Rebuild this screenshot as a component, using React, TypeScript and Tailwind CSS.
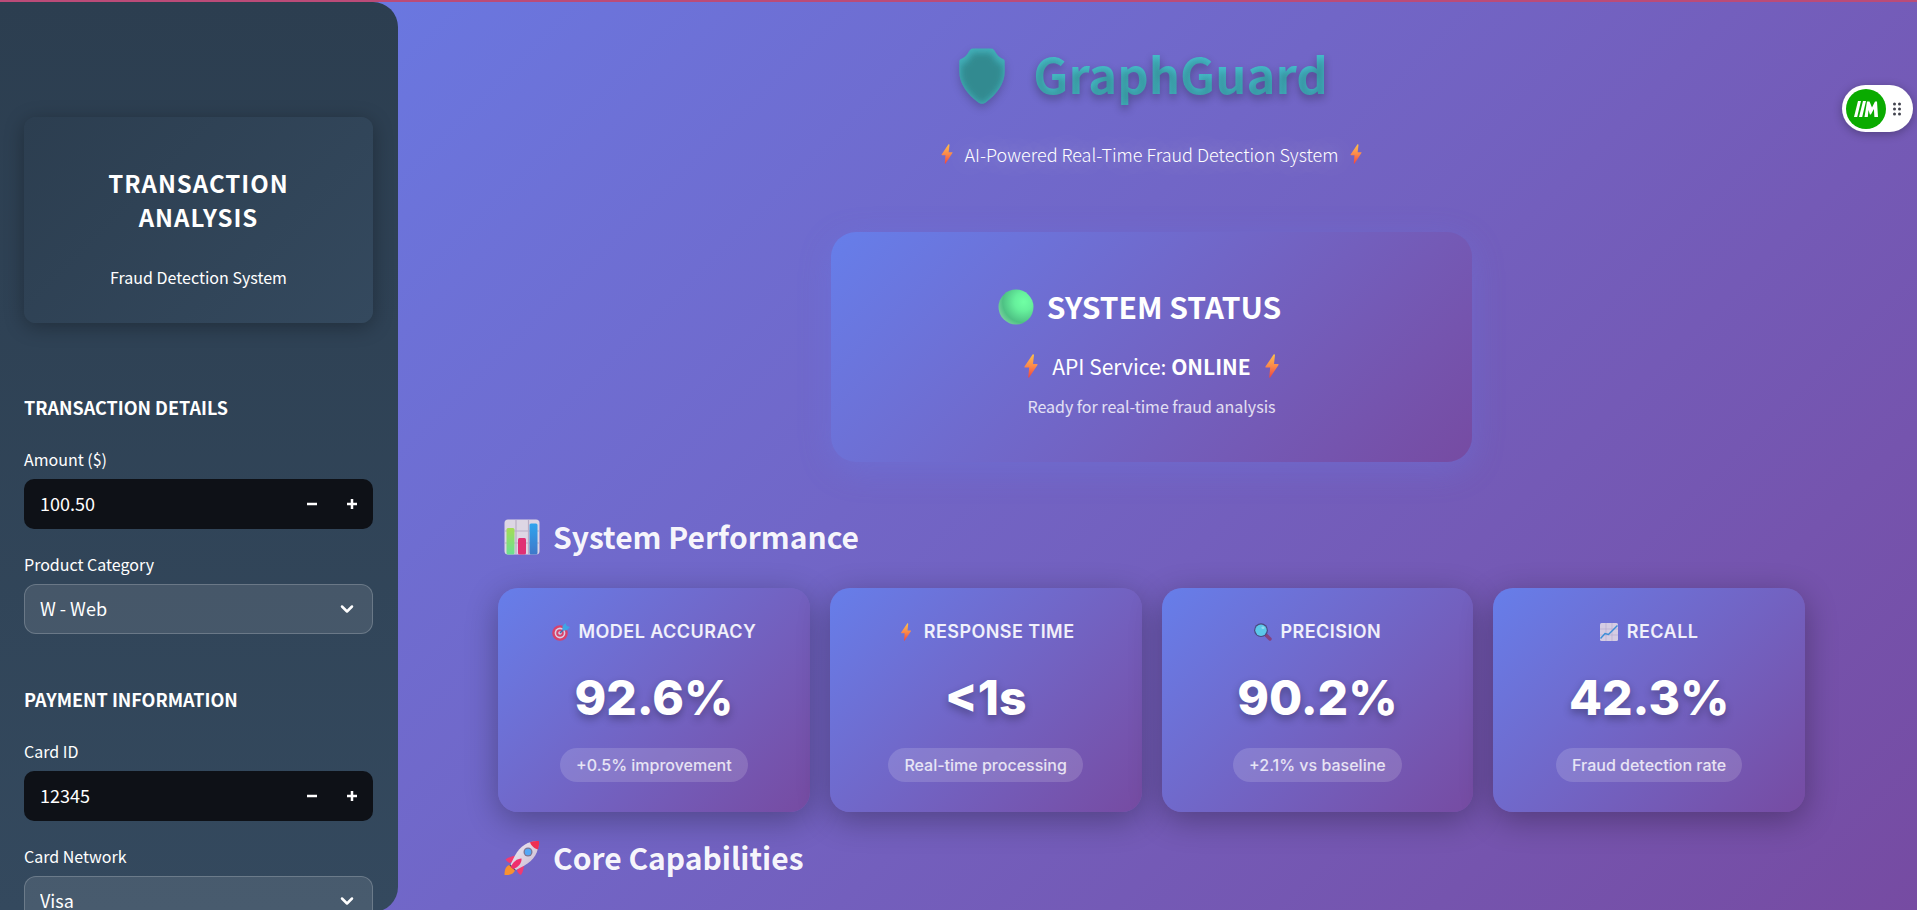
import React, { useId, useState } from "react";

const SANS = "font-['Noto_Sans_CJK_SC','Noto_Sans',sans-serif]";
const INTER = "font-['Inter','Liberation_Sans',sans-serif]";

function Bolt({ className }: { className: string }) {
  const id = useId();
  return (
    <svg viewBox="0 0 14 24" className={className} aria-hidden="true">
      <defs>
        <linearGradient id={id} x1="0" y1="0" x2="0" y2="1">
          <stop offset="0" stopColor="#fcc04a" />
          <stop offset="0.5" stopColor="#fb8a4b" />
          <stop offset="1" stopColor="#f0453f" />
        </linearGradient>
      </defs>
      <path d="M8.6 0.5 0.5 12.6c-.3.5 0 .9.5.9h4.2L4.3 23c-.1.7.6.9 1 .3l8.200-12.400c.3-.5 0-.9-.5-.9H9l1-9c.1-.7-.9-1.100-1.400-.5Z" fill={`url(#${id})`} />
    </svg>
  );
}

function Shield() {
  return (
    <svg viewBox="0 0 46 56" className="h-14 w-[46px] shrink-0 drop-shadow-[0_4px_4px_rgba(0,0,0,0.2)]" aria-hidden="true">
      <defs>
        <filter id="shield-soft" x="-20%" y="-20%" width="140%" height="140%">
          <feGaussianBlur stdDeviation="3" />
        </filter>
        <clipPath id="shield-clip">
          <path d="M14 .5h18c2.500 0 3.500 2 5 4.500 1.800 3 4 4.700 7.500 6.200 1 .5 1.200 1.300 1.200 2.300v10.500c0 11-8 22.500-19 30.500-2.500 1.700-4.900 1.700-7.400 0C8.300 46.500.300 35 .300 24V13.500c0-1 .2-1.800 1.200-2.300C5 9.700 7.200 8 9 5c1.500-2.500 2.500-4.500 5-4.500Z" />
        </clipPath>
      </defs>
      <g clipPath="url(#shield-clip)">
        <rect width="46" height="56" fill="#41aeb8" />
        <path d="M14 5h18l6 9 6 3v10c0 9-8 20-21 29C10 47 2 36 2 27V17l6-3Z" fill="#338a90" filter="url(#shield-soft)" />
      </g>
    </svg>
  );
}

function GreenCircle() {
  return (
    <svg viewBox="0 0 36 36" className="size-9" aria-hidden="true">
      <defs>
        <radialGradient id="orb" cx="0.72" cy="0.35" r="0.75">
          <stop offset="0" stopColor="#70ffa4" />
          <stop offset="0.35" stopColor="#66f09c" />
          <stop offset="0.8" stopColor="#4ec184" />
          <stop offset="1" stopColor="#72cf9b" />
        </radialGradient>
      </defs>
      <circle cx="18" cy="18" r="17.500" fill="url(#orb)" />
    </svg>
  );
}

function BarChart() {
  return (
    <svg viewBox="0 0 36 36" className="size-9" aria-hidden="true">
      <defs>
        <linearGradient id="bar-green" x1="0" y1="0" x2="0" y2="1">
          <stop offset="0" stopColor="#a5dc55" />
          <stop offset="1" stopColor="#6ae092" />
        </linearGradient>
        <linearGradient id="bar-blue" x1="0" y1="0" x2="0" y2="1">
          <stop offset="0" stopColor="#2fa4ee" />
          <stop offset="1" stopColor="#3f78c9" />
        </linearGradient>
      </defs>
      <rect x="0.500" y="0.500" width="35" height="35" rx="3.500" fill="#ddd6e4" />
      <path d="M12 1v34M24.500 1v34M1 12h34M1 24h34" stroke="#b9adc6" strokeWidth="1.200" />
      <rect x="2.500" y="9" width="8" height="26.500" rx="1.500" fill="url(#bar-green)" />
      <rect x="14" y="19" width="8" height="16.500" rx="1.500" fill="#e03074" />
      <rect x="25.500" y="4.500" width="8" height="31" rx="1.500" fill="url(#bar-blue)" />
    </svg>
  );
}

function Rocket() {
  return (
    <svg viewBox="0 0 36 36" className="size-9" aria-hidden="true">
      <defs>
        <linearGradient id="hull" x1="0" y1="0" x2="1" y2="1">
          <stop offset="0" stopColor="#f4eef6" />
          <stop offset="1" stopColor="#c5b6cd" />
        </linearGradient>
      </defs>
      <path d="M6 25c-3.500.5-5.500 3.500-5.500 10 4 .5 9-.5 10.500-4.500Z" fill="#f8912f" />
      <path d="m5.500 25.500 5.500 5 2-2.500-5-5Z" fill="#52476b" />
      <path d="M14 15.500c-5 .500-9.500 1.500-12.500 4 1 1.500 2.500 2.500 4 3.500L14 20ZM20 22c0 5-.5 9.500-3 13-2-1-3.200-2.500-4-4l3-9Z" fill="#f23a70" />
      <path d="M34.500 1C24 1 16 6 11 15.500L6.500 24.500l5.500 5.500 8.500-4.500C30 20 35 12.500 34.500 1Z" fill="url(#hull)" />
      <path d="M26 2.200C29 1 32 .7 35 1c.3 3 0 5.500-1 8.500-3.500-1-7-4-8-7.300Z" fill="#ee2f52" />
      <path d="M17.500 18.500C13 18.500 9 22 6.800 27l2.200 2C14 27.500 18 23.500 17.500 18.500Z" fill="#ef2f6d" />
      <circle cx="24" cy="12" r="4.500" fill="#7c7696" />
      <circle cx="24" cy="12" r="3.200" fill="#54a8f7" />
    </svg>
  );
}

function Target() {
  return (
    <svg viewBox="0 0 18 18" className="size-[18px]" aria-hidden="true">
      <circle cx="8" cy="10" r="7.800" fill="#d8416b" />
      <circle cx="8" cy="10" r="5.400" fill="#d9cfe6" />
      <circle cx="8" cy="10" r="3.800" fill="#d8416b" />
      <circle cx="8" cy="10" r="1.800" fill="#d9cfe6" />
      <path d="m8 10 5-5" stroke="#3a6fae" strokeWidth="1.500" />
      <path d="m10.500 7.500 0-4.500L13.500 0l1.200 3 3.300 1-3.200 3.200Z" fill="#3fa4e6" />
    </svg>
  );
}

function Magnifier() {
  return (
    <svg viewBox="0 0 18 18" className="size-[18px]" aria-hidden="true">
      <path d="m12 12 4 4" stroke="#85427f" strokeWidth="3.400" strokeLinecap="round" />
      <circle cx="7" cy="7.200" r="6.900" fill="#4a4a80" />
      <circle cx="7" cy="7.200" r="5.700" fill="#5cc8ea" />
      <ellipse cx="9" cy="4.800" rx="1.600" ry="1.200" fill="#93dcf2" />
    </svg>
  );
}

function TrendChart() {
  return (
    <svg viewBox="0 0 18 18" className="size-[18px]" aria-hidden="true">
      <rect width="18" height="18" rx="1.500" fill="#d5cce3" />
      <path d="M6 0v18M12 0v18M0 6h18M0 12h18" stroke="#b9add0" strokeWidth="0.700" />
      <path d="m0.500 15.500 4.500-5 3.500 1 9-9" fill="none" stroke="#3c8ed8" strokeWidth="1.500" />
    </svg>
  );
}

function NumberField({ label, initial, step, digits }: { label: string; initial: number; step: number; digits: number }) {
  const id = useId();
  const [value, setValue] = useState(initial.toFixed(digits));
  const bump = (d: number) => setValue((Number(value) + d).toFixed(digits));
  return (
    <div>
      <label htmlFor={id} className="block text-[16px] leading-6">{label}</label>
      <div className="mt-2 flex h-[50px] overflow-hidden rounded-[10px] bg-[#0e1117] pr-px">
        <input id={id} value={value} onChange={(e) => setValue(e.target.value)} inputMode="decimal" className="min-w-0 flex-1 bg-transparent px-4 pb-[2px] text-[18px] outline-none" />
        <button type="button" aria-label={`Decrease ${label}`} onClick={() => bump(-step)} className="flex w-10 items-center justify-center">
          <svg viewBox="0 0 10 10" className="size-[10px]"><path d="M0 5h10" stroke="white" strokeWidth="2.500" /></svg>
        </button>
        <button type="button" aria-label={`Increase ${label}`} onClick={() => bump(step)} className="flex w-10 items-center justify-center">
          <svg viewBox="0 0 10 10" className="size-[10px]"><path d="M0 5h10M5 0v10" stroke="white" strokeWidth="2.500" /></svg>
        </button>
      </div>
    </div>
  );
}

function SelectField({ label, options }: { label: string; options: string[] }) {
  const id = useId();
  return (
    <div>
      <label htmlFor={id} className="block text-[16px] leading-6">{label}</label>
      <div className="mt-2 grid items-center">
        <select id={id} className="col-start-1 row-start-1 h-[50px] w-full appearance-none rounded-[12px] border border-white/20 bg-white/10 px-[15px] pb-[2px] text-[18px] outline-none">
          {options.map((o) => <option key={o} className="text-black">{o}</option>)}
        </select>
        <svg viewBox="0 0 14 10" className="pointer-events-none col-start-1 row-start-1 mr-[19px] h-[10px] w-[14px] justify-self-end">
          <path d="m2 2.500 5 5 5-5" fill="none" stroke="white" strokeWidth="2.500" strokeLinecap="round" strokeLinejoin="round" />
        </svg>
      </div>
    </div>
  );
}

function Sidebar() {
  return (
    <aside className="h-screen w-[398px] shrink-0 overflow-hidden rounded-r-[25px] bg-linear-to-b from-[#2c3e50] to-[#34495e] px-6 pt-[115px] text-white pr-[25px]">
      <div className="rounded-[12px] bg-linear-135 from-[#2c3e50] to-[#34495e] px-8 pt-[49px] pb-[34px] text-center shadow-[0_4px_20px_rgba(0,0,0,0.3)]">
        <h2 className="text-[24px] leading-[34px] font-bold tracking-[1px]">TRANSACTION ANALYSIS</h2>
        <p className="mt-[31px] text-[16px] leading-6">Fraud Detection System</p>
      </div>
      <section className="mt-[72px]">
        <h3 className="text-[18px] leading-6 font-bold">TRANSACTION DETAILS</h3>
        <div className="mt-7 flex flex-col gap-[23px]">
          <NumberField label="Amount ($)" initial={100.5} step={0.01} digits={2} />
          <SelectField label="Product Category" options={["W - Web", "C - Card", "H - Home", "R - Retail", "S - Service"]} />
        </div>
      </section>
      <section className="mt-[53px]">
        <h3 className="text-[18px] leading-6 font-bold">PAYMENT INFORMATION</h3>
        <div className="mt-7 flex flex-col gap-[23px]">
          <NumberField label="Card ID" initial={12345} step={1} digits={0} />
          <SelectField label="Card Network" options={["Visa", "Mastercard", "American Express", "Discover"]} />
        </div>
      </section>
    </aside>
  );
}

function SectionTitle({ icon, children }: { icon: React.ReactNode; children: React.ReactNode }) {
  return (
    <h2 className="flex items-center gap-[13px] text-[30px] font-bold">
      {icon}
      <span className="pb-[2px] leading-[48px]">{children}</span>
    </h2>
  );
}

function Metric({ icon, label, value, note }: { icon: React.ReactNode; label: string; value: string; note: string }) {
  return (
    <article className={`${INTER} flex flex-col items-center rounded-[20px] bg-linear-135 from-[#667eea] to-[#764ba2] pt-8 pb-[30px] text-white shadow-[0_8px_32px_rgba(0,0,0,0.3)]`}>
      <h3 className="flex items-center gap-[9px] text-[18px] leading-6 font-semibold tracking-wide text-white/90">{icon}{label}</h3>
      <p className="mt-6 text-[48px] leading-[60px] font-extrabold [text-shadow:0_4px_8px_rgba(0,0,0,0.3)]">{value}</p>
      <p className="mt-5 rounded-full bg-white/15 px-4 text-[16px] leading-[34px] font-medium text-white/80">{note}</p>
    </article>
  );
}

function ExtensionWidget() {
  return (
    <div className="absolute top-[85px] right-1 flex h-[47px] w-[71px] items-center rounded-full bg-white pl-1 shadow-[0_2px_10px_rgba(0,0,0,0.3)]">
      <button type="button" aria-label="Open assistant" className="flex size-10 items-center justify-center rounded-full bg-[#0aab00]">
        <svg viewBox="0 0 24 16" className="h-4 w-6">
          <path d="M4 0h3L3.200 16H0ZM9 0h3L8.200 16H5ZM10.500 16 13 .5h2.500L18 6.500 21 .5h2L24 16h-3.600l-.5-8-3 5.500h-1L14.500 9 13.800 16Z" fill="white" />
        </svg>
      </button>
      <svg viewBox="0 0 8 14" className="ml-[7px] h-[14px] w-2" fill="#43444f">
        <circle cx="1.500" cy="2" r="1.500" /><circle cx="6.500" cy="2" r="1.500" />
        <circle cx="1.500" cy="7" r="1.500" /><circle cx="6.500" cy="7" r="1.500" />
        <circle cx="1.500" cy="12" r="1.500" /><circle cx="6.500" cy="12" r="1.500" />
      </svg>
    </div>
  );
}

export default function App() {
  return (
    <div className={`${SANS} relative flex h-screen flex-col overflow-hidden bg-linear-135 from-[#667eea] to-[#764ba2]`}>
      <div className="h-[2px] shrink-0 bg-[#bb4b78]" />
      <div className="flex">
        <Sidebar />
        <main className="min-w-0 flex-1 pr-28 pl-[100px] text-white">
          <header className="flex flex-col items-center pt-[38px]">
            <h1 className="mr-4 flex items-center gap-7">
              <Shield />
              <span className="bg-linear-to-r from-[#48c3cd] to-[#47bfd0] bg-clip-text pb-[6px] text-[49px] leading-[66px] font-bold text-transparent [text-shadow:0_4px_8px_rgba(0,0,0,0.3)]">GraphGuard</span>
            </h1>
            <p className="mt-[26px] flex items-center gap-3 text-[18px] leading-8 font-light text-white [text-shadow:0_0_20px_rgba(255,255,255,0.5)]">
              <Bolt className="h-5 w-3" />AI-Powered Real-Time Fraud Detection System<Bolt className="h-5 w-3" />
            </p>
          </header>

          <section className="mx-auto mt-[62px] flex h-[230px] max-w-[641px] flex-col items-center rounded-[25px] bg-linear-135 from-[#667eea] to-[#764ba2] pt-[50px] shadow-[0_8px_32px_rgba(102,126,234,0.3)]">
            <div className="mr-6"><SectionTitle icon={<GreenCircle />}>SYSTEM STATUS</SectionTitle></div>
            <p className="mt-[18px] flex items-center gap-[14px] text-[21px] leading-8">
              <Bolt className="h-6 w-[14px]" /><span>API Service: <strong className="font-bold">ONLINE</strong></span><Bolt className="h-6 w-[14px]" />
            </p>
            <p className="mt-2 text-[16px] leading-8 text-white/80">Ready for real-time fraud analysis</p>
          </section>

          <section className="mt-[50px]">
            <div className="pl-[6px] text-white/95"><SectionTitle icon={<BarChart />}>System Performance</SectionTitle></div>
            <div className="mt-[26px] grid grid-cols-4 gap-5">
              <Metric icon={<Target />} label="MODEL ACCURACY" value="92.6%" note="+0.5% improvement" />
              <Metric icon={<Bolt className="h-[18px] w-[18px]" />} label="RESPONSE TIME" value="<1s" note="Real-time processing" />
              <Metric icon={<Magnifier />} label="PRECISION" value="90.2%" note="+2.1% vs baseline" />
              <Metric icon={<TrendChart />} label="RECALL" value="42.3%" note="Fraud detection rate" />
            </div>
          </section>

          <section className="mt-[21px]">
            <div className="pl-[6px] text-white/95"><SectionTitle icon={<Rocket />}>Core Capabilities</SectionTitle></div>
          </section>
        </main>
      </div>
      <ExtensionWidget />
    </div>
  );
}
